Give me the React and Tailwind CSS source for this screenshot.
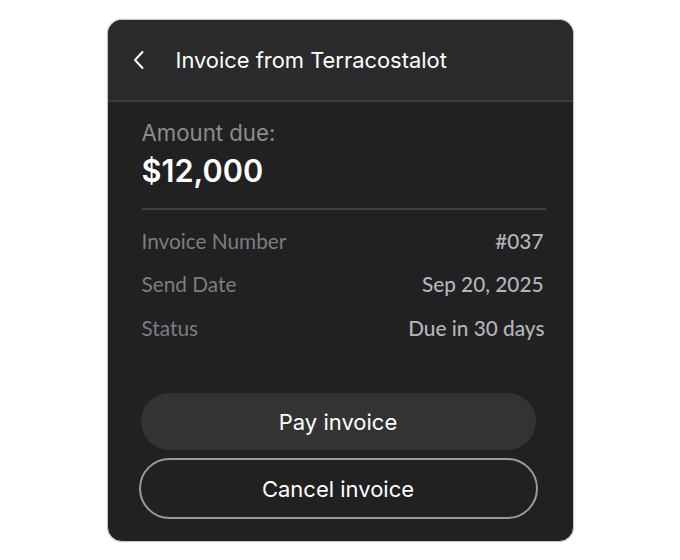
export default function App() {
  return (
    <div className="w-[680px] h-[560px] bg-white flex items-center justify-center">
      <div className="w-[467px] h-[523px] rounded-[15px] border border-[#c8c8c8] bg-[#212121] overflow-hidden flex flex-col shadow-[0_0_2px_rgba(0,0,0,0.15)]">
        <div className="h-[82px] bg-[#2a2a2a] border-b-2 border-[#3a3a3a] flex items-center pl-[24px] shrink-0">
          <svg width="14" height="20" viewBox="0 0 14 20" fill="none" className="mr-[30px] mt-[1px]">
            <path d="M10.5 2 L3 10 L10.5 18" stroke="white" strokeWidth="2" strokeLinecap="round" strokeLinejoin="round" />
          </svg>
          <span className="text-white text-[21.9px] font-['Inter',sans-serif] font-normal mt-[1px]">Invoice from Terracostalot</span>
        </div>
        <div className="flex flex-col pl-[34px] pr-[27px] pt-[17px]">
          <div className="text-[#8c8c8c] text-[22.2px] leading-[28px] font-['Inter',sans-serif]">Amount due:</div>
          <div className="text-white text-[30.7px] leading-[38px] font-semibold font-['Inter',sans-serif] mt-[5px]">$12,000</div>
          <div className="h-[2px] bg-[#3f3f3f] mt-[18px]" />
          <div className="flex flex-col font-['Lato',sans-serif] text-[20.8px] mt-[18px] gap-[17.5px]">
            <div className="flex justify-between items-center leading-[26px]">
              <span className="text-[#7c7c84]">Invoice Number</span>
              <span className="text-[#b4b4bc] font-medium pr-[2px]">#037</span>
            </div>
            <div className="flex justify-between items-center leading-[26px]">
              <span className="text-[#7c7c84]">Send Date</span>
              <span className="text-[#b4b4bc] font-medium pr-[2px]">Sep 20, 2025</span>
            </div>
            <div className="flex justify-between items-center leading-[26px]">
              <span className="text-[#7c7c84]">Status</span>
              <span className="text-[#b4b4bc] font-medium pr-[1px]">Due in 30 days</span>
            </div>
          </div>
        </div>
        <div className="flex flex-col items-center mt-[52px] gap-[8px] font-['Inter',sans-serif]">
          <button className="w-[395px] h-[57px] rounded-full bg-[#333333] text-white text-[22px] ml-[-4px] pt-[3px]">Pay invoice</button>
          <button className="w-[399px] h-[61px] rounded-full border-2 border-[#9a9a9a] text-white text-[22px] ml-[-4px] pt-[3px]">Cancel invoice</button>
        </div>
      </div>
    </div>
  );
}
